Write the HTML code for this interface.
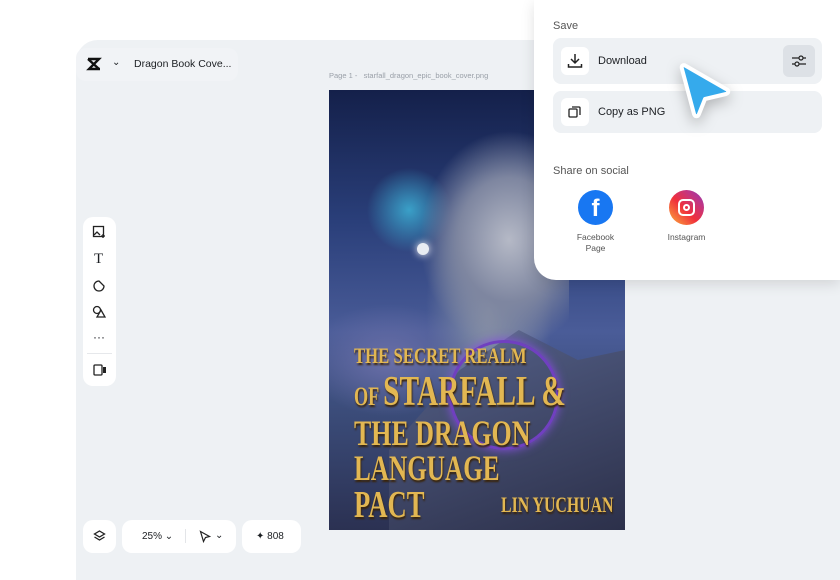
<!DOCTYPE html>
<html><head><style>
*{margin:0;padding:0;box-sizing:border-box}
body{width:840px;height:560px;background:#fff;position:relative;overflow:hidden;font-family:"Liberation Sans",sans-serif;color:#1c1f23}
.ws{position:absolute;left:76px;top:40px;width:780px;height:540px;background:#eef1f4;border-top-left-radius:22px}
.card{position:absolute;background:#f7f8fa;border-radius:10px}
.w{background:#fff}
.cover{position:absolute;left:329px;top:90px;width:296px;height:440px;overflow:hidden;
background:radial-gradient(ellipse 60px 60px at 80px 120px,#3aa0c8 0%,transparent 70%),
radial-gradient(ellipse 120px 80px at 60px 270px,#6a6fa8 0%,transparent 70%),
radial-gradient(ellipse 90px 200px at 160px 220px,#8c95a8 0%,transparent 70%),
linear-gradient(180deg,#14204a 0%,#2a3f7a 30%,#4a5c98 55%,#3d4f7e 70%,#2b3152 100%)}
.t{position:absolute;color:#e2b752;font-family:"Liberation Serif",serif;font-weight:bold;text-shadow:1px 2px 2px #3a2408;white-space:nowrap;transform-origin:left top}
.pop{position:absolute;left:534px;top:0;width:306px;height:280px;background:#fff;border-bottom-left-radius:22px;box-shadow:0 4px 14px rgba(0,0,0,.12)}
.row{position:absolute;left:19px;width:269px;background:#eef1f4;border-radius:8px}
.ib{position:absolute;left:8px;width:28px;height:28px;background:#fff;border-radius:6px}
.ic{position:absolute;left:92px}
</style></head><body>
<div class="ws"></div>
<div class="card" style="left:76px;top:48px;width:162px;height:33px;background:#f1f3f6"></div>
<svg style="position:absolute;left:86px;top:57px" width="16" height="14" viewBox="0 0 16 14"><path d="M2 2h11L3 12h11M2 2l11 10" stroke="#111" stroke-width="2.4" fill="none"/></svg>
<div style="position:absolute;left:112px;top:57px;font-size:10px">⌄</div>
<div style="position:absolute;left:134px;top:58px;font-size:10.5px">Dragon Book Cove...</div>
<div style="position:absolute;left:329px;top:71px;font-size:7.5px;color:#9aa0a8">Page 1 -&nbsp;&nbsp; starfall_dragon_epic_book_cover.png</div>
<div class="cover">
<div style="position:absolute;left:90px;top:40px;width:150px;height:220px;background:radial-gradient(ellipse at 60% 50%,#b5b9c6 0%,#7e86a0 40%,transparent 70%)"></div>
<div style="position:absolute;left:60px;top:240px;width:236px;height:200px;background:linear-gradient(160deg,transparent 0%,#4a5478 30%,#2c304a 100%);clip-path:polygon(0 60%,30% 20%,55% 0,80% 15%,100% 10%,100% 100%,0 100%)"></div>
<div style="position:absolute;left:120px;top:250px;width:110px;height:110px;border-radius:50%;border:3px solid #7040c0;box-shadow:0 0 10px #8850e0"></div>
<div style="position:absolute;left:88px;top:153px;width:12px;height:12px;border-radius:50%;background:#e8ecf2;box-shadow:0 0 8px #fff"></div>
<div class="t" style="left:25px;top:253px;font-size:22px;transform:scaleX(.76)">THE SECRET REALM</div>
<div class="t" style="left:25px;top:278px;font-size:42px;transform:scaleX(.7)"><span style="font-size:26px">OF </span>STARFALL &amp;</div>
<div class="t" style="left:25px;top:322px;font-size:36px;transform:scaleX(.72)">THE DRAGON</div>
<div class="t" style="left:25px;top:357px;font-size:36px;transform:scaleX(.7)">LANGUAGE</div>
<div class="t" style="left:25px;top:393px;font-size:38px;transform:scaleX(.7)">PACT</div>
<div class="t" style="left:172px;top:402px;font-size:22px;transform:scaleX(.72)">LIN YUCHUAN</div>
</div>
<div class="card w" style="left:83px;top:217px;width:33px;height:169px"></div>
<svg class="ic" style="top:225px" width="14" height="14" viewBox="0 0 14 14"><rect x="1.5" y="1.5" width="10" height="10" fill="none" stroke="#222" stroke-width="1.3"/><path d="M2 10l3-3 3 3M9 11h4M11 9v4" stroke="#222" stroke-width="1.3" fill="none"/></svg>
<div class="ic" style="top:251px;font-family:'Liberation Serif',serif;font-size:15px;left:94px">T</div>
<svg class="ic" style="top:279px" width="14" height="14" viewBox="0 0 14 14"><path d="M7 2a5 5 0 1 0 5 5L7 2z" fill="none" stroke="#222" stroke-width="1.3"/></svg>
<svg class="ic" style="top:305px" width="14" height="14" viewBox="0 0 14 14"><circle cx="5" cy="5" r="3.5" fill="none" stroke="#222" stroke-width="1.3"/><path d="M9 5l4 7H5z" fill="#fff" stroke="#222" stroke-width="1.3"/></svg>
<div class="ic" style="top:330px;font-size:12px;left:93px">···</div>
<div style="position:absolute;left:87px;top:353px;width:25px;height:1px;background:#e6e8eb"></div>
<svg style="position:absolute;left:93px;top:364px" width="14" height="12" viewBox="0 0 14 12"><rect x="1" y="1" width="8" height="10" rx="1" fill="none" stroke="#222" stroke-width="1.3"/><path d="M10 3h3v6h-3z" fill="#222"/></svg>
<div class="card w" style="left:83px;top:520px;width:33px;height:33px"></div>
<svg style="position:absolute;left:93px;top:530px" width="13" height="13" viewBox="0 0 13 13"><path d="M6.5 1l5 3-5 3-5-3z M1.5 7l5 3 5-3" fill="none" stroke="#222" stroke-width="1.3"/></svg>
<div class="card w" style="left:122px;top:520px;width:114px;height:33px"></div>
<div style="position:absolute;left:142px;top:531px;font-size:10px">25% ⌄</div>
<div style="position:absolute;left:185px;top:529px;width:1px;height:14px;background:#e3e5e8"></div>
<svg style="position:absolute;left:199px;top:530px" width="12" height="13" viewBox="0 0 12 13"><path d="M1.5 1.5l9 5-4 1-2 4z" fill="none" stroke="#222" stroke-width="1.2"/></svg>
<div style="position:absolute;left:215px;top:530px;font-size:10px">⌄</div>
<div class="card w" style="left:242px;top:520px;width:59px;height:33px"></div>
<div style="position:absolute;left:256px;top:531px;font-size:10px">✦ 808</div>
<div class="pop">
<div style="position:absolute;left:19px;top:20px;font-size:11px;color:#555">Save</div>
<div class="row" style="top:38px;height:46px"><div class="ib" style="top:9px"></div>
<svg style="position:absolute;left:14px;top:15px" width="16" height="16" viewBox="0 0 16 16"><path d="M8 1v9M4 6l4 4 4-4M1.5 11v3h13v-3" fill="none" stroke="#222" stroke-width="1.5"/></svg>
<div style="position:absolute;left:45px;top:17px;font-size:11px">Download</div>
<div style="position:absolute;left:230px;top:7px;width:32px;height:32px;background:#dde1e6;border-radius:6px"></div>
<svg style="position:absolute;left:238px;top:15px" width="16" height="16" viewBox="0 0 16 16"><path d="M1 5h14M1 11h14" stroke="#222" stroke-width="1.2"/><circle cx="10" cy="5" r="2" fill="#dde1e6" stroke="#222" stroke-width="1.2"/><circle cx="6" cy="11" r="2" fill="#dde1e6" stroke="#222" stroke-width="1.2"/></svg></div>
<div class="row" style="top:91px;height:42px"><div class="ib" style="top:7px"></div>
<svg style="position:absolute;left:15px;top:14px" width="14" height="14" viewBox="0 0 14 14"><rect x="1" y="4" width="8" height="8" rx="1" fill="none" stroke="#222" stroke-width="1.3"/><path d="M4 2h7a1 1 0 0 1 1 1v7" fill="none" stroke="#222" stroke-width="1.3"/></svg>
<div style="position:absolute;left:45px;top:15px;font-size:11px">Copy as PNG</div></div>
<div style="position:absolute;left:19px;top:165px;font-size:11px;color:#555">Share on social</div>
<div style="position:absolute;left:44px;top:190px;width:35px;height:35px;border-radius:50%;background:#1877f2;color:#fff;font-weight:bold;font-size:24px;text-align:center;line-height:38px">f</div>
<div style="position:absolute;left:30px;top:232px;width:63px;text-align:center;font-size:8.5px;color:#555;line-height:11px">Facebook<br>Page</div>
<div style="position:absolute;left:135px;top:190px;width:35px;height:35px;border-radius:50%;background:linear-gradient(45deg,#fbb03b,#f0303c 45%,#c13584 75%,#8a3ab9)"></div>
<div style="position:absolute;left:144px;top:199px;width:17px;height:17px;border:2px solid #fff;border-radius:5px"></div>
<div style="position:absolute;left:149px;top:204px;width:7px;height:7px;border:2px solid #fff;border-radius:50%"></div>
<div style="position:absolute;left:122px;top:232px;width:61px;text-align:center;font-size:8.5px;color:#555">Instagram</div>
</div>
<svg style="position:absolute;left:676px;top:58px;filter:drop-shadow(0 5px 7px rgba(0,0,0,.25))" width="64" height="66" viewBox="0 0 64 66"><path d="M10 8c-3-2-5 0-4 3l12 45c1 3 4 3 5 0l6-15 21-5c3-1 3-4 0-5z" fill="#35aaec" stroke="#fff" stroke-width="4" stroke-linejoin="round"/></svg>
</body></html>
